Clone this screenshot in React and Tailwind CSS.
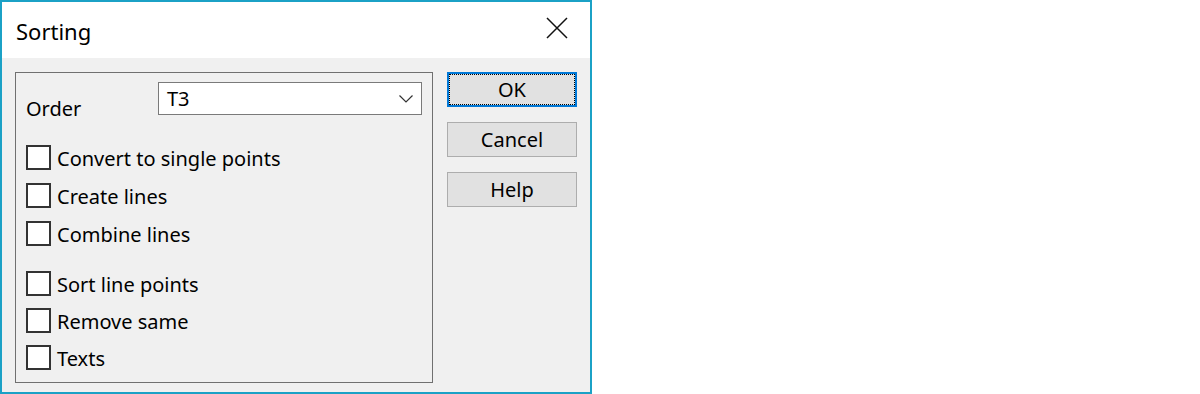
import React from 'react';

const font = { fontFamily: '"Noto Sans", "Open Sans", sans-serif' };

function Checkbox({ label }) {
  return (
    <label className="flex items-center h-[25px] gap-[6px] text-[20px] text-black">
      <span className="w-[25px] h-[25px] border-2 border-[#333333] bg-white shrink-0"></span>
      <span className="leading-none mt-[2px]">{label}</span>
    </label>
  );
}

function DlgButton({ children, focused }) {
  if (focused) {
    return (
      <button className="h-[35px] w-[130px] bg-[#e1e1e1] border-2 border-[#0078d7] outline-1 outline-dotted outline-black outline-offset-[-3px] text-[20px] text-black leading-none">
        {children}
      </button>
    );
  }
  return (
    <button className="h-[35px] w-[130px] bg-[#e1e1e1] border border-[#adadad] text-[20px] text-black leading-none">
      {children}
    </button>
  );
}

export default function App() {
  return (
    <div className="w-[1200px] h-[394px] bg-white" style={font}>
      <div className="w-[592px] h-[394px] border-2 border-[#1ba1c6] flex flex-col">
        {/* Title bar */}
        <div className="h-[56px] bg-white flex items-center justify-between pl-[14px] pr-[22px] pt-[2px] shrink-0">
          <span className="text-[22px] text-black leading-none">Sorting</span>
          <svg width="22" height="22" viewBox="0 0 22 22" className="mt-[-6px]">
            <path d="M1 1 L21 21 M21 1 L1 21" stroke="#111" strokeWidth="1.5" fill="none" />
          </svg>
        </div>

        {/* Body */}
        <div className="flex-1 bg-[#f0f0f0] flex pt-[14px] pl-[13px] gap-[14px]">
          {/* Group box */}
          <div className="w-[418px] h-[311px] border border-[#707070] flex flex-col pt-[9px] pl-[10px]">
            <div className="flex h-[33px]">
              <span className="w-[132px] text-[20px] text-black leading-none pt-[17px]">Order</span>
              <div className="w-[264px] h-[33px] bg-white border border-[#7a7a7a] flex items-center justify-between pl-[8px] pr-[8px]">
                <span className="text-[20px] text-black leading-none">T3</span>
                <svg width="14" height="8" viewBox="0 0 14 8">
                  <path d="M0.5 0.5 L7 7 L13.5 0.5" stroke="#333" strokeWidth="1.2" fill="none" />
                </svg>
              </div>
            </div>

            <div className="flex flex-col gap-[13px] mt-[30px]">
              <Checkbox label="Convert to single points" />
              <Checkbox label="Create lines" />
              <Checkbox label="Combine lines" />
            </div>
            <div className="flex flex-col gap-[12px] mt-[25px]">
              <Checkbox label="Sort line points" />
              <Checkbox label="Remove same" />
              <Checkbox label="Texts" />
            </div>
          </div>

          {/* Buttons */}
          <div className="flex flex-col gap-[15px]">
            <DlgButton focused>OK</DlgButton>
            <DlgButton>Cancel</DlgButton>
            <DlgButton>Help</DlgButton>
          </div>
        </div>
      </div>
    </div>
  );
}
